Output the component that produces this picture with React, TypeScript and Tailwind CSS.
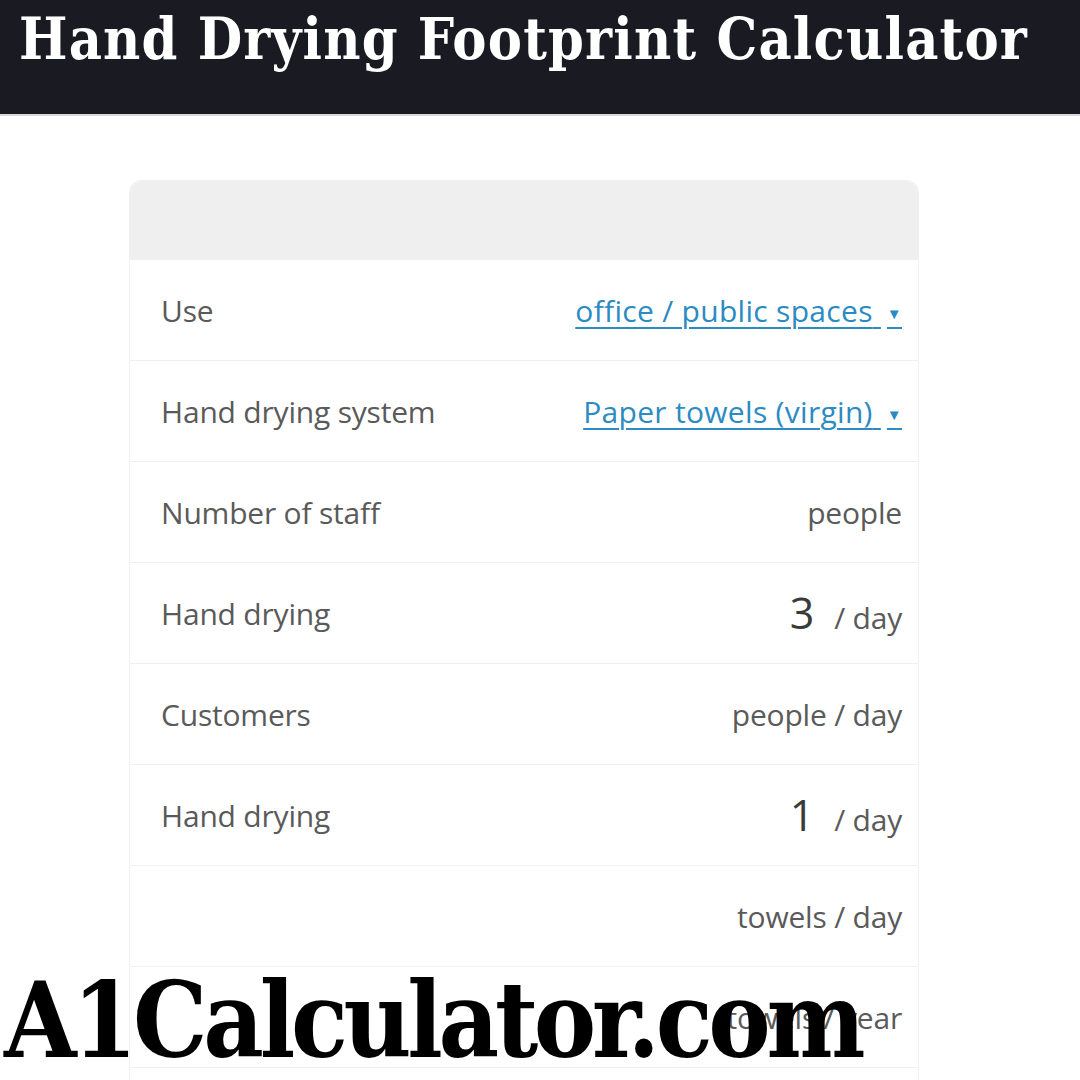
import React from 'react'

type Row = {
    label: string
    value?: string
    unit?: string
    link?: string
}

const rows: Row[] = [
    { label: 'Use', link: 'office / public spaces' },
    { label: 'Hand drying system', link: 'Paper towels (virgin)' },
    { label: 'Number of staff', unit: 'people' },
    { label: 'Hand drying', value: '3', unit: '/ day' },
    { label: 'Customers', unit: 'people / day' },
    { label: 'Hand drying', value: '1', unit: '/ day' },
    { label: '', unit: 'towels / day' },
    { label: '', unit: 'towels / year' },
    { label: '', unit: '' },
]

export default function App() {
    return (
        <div className="relative h-[1080px] w-[1080px] overflow-hidden bg-white" style={{ fontFamily: '"Open Sans", sans-serif' }}>
            {/* Header */}
            <div className="h-[116px] border-b-2 border-[#d9d9d9] bg-[#1a1a22] pl-[19px]">
                <h1
                    className="whitespace-nowrap text-[57px] font-bold leading-[78px] tracking-[1.2px] text-white"
                    style={{ fontFamily: '"DejaVu Serif Condensed", "DejaVu Serif", serif' }}
                >
                    Hand Drying Footprint Calculator
                </h1>
            </div>

            {/* Calculator card */}
            <div className="ml-[129px] mt-[64px] w-[790px] rounded-t-[12px] border border-[#f0f0f0] bg-white">
                <div className="h-[79px] rounded-t-[12px] bg-[#efefef]" />
                {rows.map((row, i) => (
                    <div
                        key={i}
                        className="flex h-[101px] items-center justify-between border-b border-[#f0f0f0] pl-[31px] pr-[16px] text-[30px] tracking-[-0.2px] text-[#5a5a5a]"
                    >
                        <span>{row.label}</span>
                        {row.link ? (
                            <span className="tracking-[0.3px] text-[#2b8bc2] underline decoration-[2px] underline-offset-[5px]">
                                {row.link} <span className="ml-[6px] align-middle text-[15px]">▼</span>
                            </span>
                        ) : (
                            <span className="flex items-baseline">
                                {row.value && (
                                    <span className="mr-[20px] text-[43px] text-[#3a3a3a]">{row.value}</span>
                                )}
                                {row.unit}
                            </span>
                        )}
                    </div>
                ))}
            </div>

            {/* Watermark */}
            <div
                className="absolute left-[4px] top-[968px] whitespace-nowrap text-[104px] font-bold leading-[106px] tracking-[-4.3px] text-black"
                style={{ fontFamily: '"DejaVu Serif Condensed", "DejaVu Serif", serif' }}
            >
                A1Calculator.com
            </div>
        </div>
    )
}
